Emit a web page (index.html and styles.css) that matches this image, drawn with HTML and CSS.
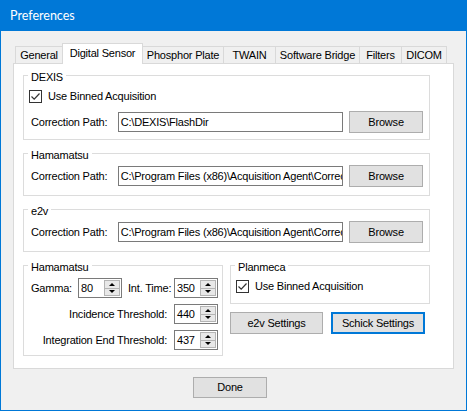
FILE: index.html
```
<!DOCTYPE html>
<html>
<head>
<meta charset="utf-8">
<title>Preferences</title>
<link rel="stylesheet" href="styles.css">
</head>
<body>
<div class="window">
  <div class="titlebar"><span class="title">Preferences</span></div>
  <div class="client">
    <div class="tabstrip">
      <div class="tab t-general">General</div>
      <div class="tab tab-active t-digital">Digital Sensor</div>
      <div class="tab t-phosphor">Phosphor Plate</div>
      <div class="tab t-twain">TWAIN</div>
      <div class="tab t-bridge">Software Bridge</div>
      <div class="tab t-filters">Filters</div>
      <div class="tab t-dicom">DICOM</div>
    </div>
    <div class="tabpage">
      <div class="group group-dexis">
        <div class="group-title">DEXIS</div>
        <div class="check-row">
          <span class="checkbox"><svg width="11" height="11" viewBox="0 0 11 11"><path d="M1.5 5.5 L4.2 8.2 L9.5 2.5" fill="none" stroke="#333" stroke-width="1.2"/></svg></span>
          <span class="check-label">Use Binned Acquisition</span>
        </div>
        <div class="path-row path-row-dexis">
          <span class="path-label">Correction Path:</span>
          <div class="textbox">C:\DEXIS\FlashDir</div>
          <div class="btn btn-browse">Browse</div>
        </div>
      </div>

      <div class="group group-path">
        <div class="group-title">Hamamatsu</div>
        <div class="path-row">
          <span class="path-label">Correction Path:</span>
          <div class="textbox">C:\Program Files (x86)\Acquisition Agent\Correction</div>
          <div class="btn btn-browse">Browse</div>
        </div>
      </div>

      <div class="group group-path">
        <div class="group-title">e2v</div>
        <div class="path-row">
          <span class="path-label">Correction Path:</span>
          <div class="textbox">C:\Program Files (x86)\Acquisition Agent\Correction</div>
          <div class="btn btn-browse">Browse</div>
        </div>
      </div>

      <div class="bottom-row">
        <div class="group group-ham">
          <div class="group-title">Hamamatsu</div>
          <div class="nud-row nud-row-first">
            <span class="lbl lbl-gamma">Gamma:</span>
            <div class="nud"><span class="nud-val">80</span><span class="spin"><span class="spin-btn"><span class="arr-up"></span></span><span class="spin-btn"><span class="arr-down"></span></span></span></div>
            <span class="lbl lbl-int">Int. Time:</span>
            <div class="nud"><span class="nud-val">350</span><span class="spin"><span class="spin-btn"><span class="arr-up"></span></span><span class="spin-btn"><span class="arr-down"></span></span></span></div>
          </div>
          <div class="nud-row">
            <span class="lbl lbl-right">Incidence Threshold:</span>
            <div class="nud"><span class="nud-val">440</span><span class="spin"><span class="spin-btn"><span class="arr-up"></span></span><span class="spin-btn"><span class="arr-down"></span></span></span></div>
          </div>
          <div class="nud-row">
            <span class="lbl lbl-right">Integration End Threshold:</span>
            <div class="nud"><span class="nud-val">437</span><span class="spin"><span class="spin-btn"><span class="arr-up"></span></span><span class="spin-btn"><span class="arr-down"></span></span></span></div>
          </div>
        </div>
        <div class="right-col">
          <div class="group group-plan">
            <div class="group-title">Planmeca</div>
            <div class="check-row">
              <span class="checkbox"><svg width="11" height="11" viewBox="0 0 11 11"><path d="M1.5 5.5 L4.2 8.2 L9.5 2.5" fill="none" stroke="#333" stroke-width="1.2"/></svg></span>
              <span class="check-label">Use Binned Acquisition</span>
            </div>
          </div>
          <div class="btn-row">
            <div class="btn btn-e2v">e2v Settings</div>
            <div class="btn btn-schick">Schick Settings</div>
          </div>
        </div>
      </div>
    </div>
    <div class="footer">
      <div class="btn btn-done">Done</div>
    </div>
  </div>
</div>
</body>
</html>
```
FILE: styles.css
```
* { box-sizing: border-box; }
html, body { margin: 0; padding: 0; }
body {
  font-family: "Liberation Sans", Arial, sans-serif;
  font-size: 11px;
  letter-spacing: -0.2px;
  line-height: 13px;
  color: #000;
  background: #f0f0f0;
}
.window {
  width: 467px;
  height: 411px;
  border: 1px solid #0078d7;
  border-top: none;
  background: #f0f0f0;
  display: flex;
  flex-direction: column;
}
.titlebar {
  height: 31px;
  margin: 0 -1px;
  background: #0078d7;
  display: flex;
  align-items: center;
  padding-left: 10px;
}
.title {
  font-family: Lato, "Noto Sans", sans-serif;
  font-size: 12.5px;
  letter-spacing: 0;
  color: #fff;
  line-height: 16px;
}
.client {
  padding: 12px 12px 0 12px;
}
.tabstrip {
  height: 20px;
  display: flex;
  align-items: flex-end;
  padding-left: 2px;
}
.tab {
  height: 17px;
  border: 1px solid #d9d9d9;
  border-bottom: none;
  margin-right: -1px;
  background: #f0f0f0;
  text-align: center;
  padding-top: 1px;
  line-height: 15px;
  white-space: nowrap;
}
.tab-active {
  height: 21px;
  margin-bottom: -1px;
  background: #fff;
  padding-top: 3px;
  line-height: 13px;
  position: relative;
  z-index: 1;
}
.t-general { width: 48px; }
.t-digital { width: 81px; }
.t-phosphor { width: 82px; }
.t-twain { width: 53px; }
.t-bridge { width: 85px; }
.t-filters { width: 43px; }
.t-dicom { width: 46px; }

.tabpage {
  width: 441px;
  height: 306px;
  background: #fff;
  border: 1px solid #d9d9d9;
  padding: 11px 0 0 9px;
}
.group {
  width: 407px;
  border: 1px solid #dcdcdc;
  display: flex;
  flex-direction: column;
  padding: 0 6px 8px 7px;
  margin-bottom: 13px;
}
.group-title {
  align-self: flex-start;
  margin-top: -5px;
  margin-left: -3px;
  padding: 0 3px;
  background: #fff;
  line-height: 13px;
  height: 13px;
}
.group-dexis { padding-bottom: 6px; }
.check-row {
  height: 17px;
  margin-top: 4px;
  margin-left: -2px;
  display: flex;
  align-items: center;
}
.checkbox {
  width: 13px;
  height: 13px;
  border: 1px solid #333;
  background: #fff;
  display: flex;
  align-items: center;
  justify-content: center;
  margin-right: 6px;
}
.checkbox svg { display: block; }
.path-row {
  height: 22px;
  margin-top: 3px;
  display: flex;
  align-items: center;
}
.path-row-dexis { margin-top: 6px; }
.path-label { width: 87px; }
.textbox {
  width: 226px;
  height: 20px;
  border: 1px solid #7a7a7a;
  background: #fff;
  padding: 0 2px;
  line-height: 18px;
  white-space: nowrap;
  overflow: hidden;
}
.btn {
  height: 22px;
  background: #e1e1e1;
  border: 1px solid #adadad;
  display: flex;
  align-items: center;
  justify-content: center;
  white-space: nowrap;
}
.btn-browse { width: 74px; margin-left: 6px; }

.bottom-row {
  display: flex;
  gap: 7px;
}
.group-ham {
  width: 200px;
  padding: 0 4px 5px 7px;
  margin-bottom: 0;
}
.nud-row {
  height: 20px;
  margin-top: 6px;
  display: flex;
  align-items: center;
  justify-content: flex-end;
}
.nud-row-first {
  margin-top: 4px;
  justify-content: flex-start;
}
.lbl-gamma { width: 47px; }
.lbl-int { width: 46px; margin-left: 6px; }
.lbl-right { margin-right: 7px; }
.nud {
  width: 44px;
  height: 20px;
  border: 1px solid #7a7a7a;
  background: #fff;
  padding: 1px;
  display: flex;
}
.nud-val {
  flex: 1;
  padding-left: 1px;
  line-height: 16px;
}
.spin {
  width: 16px;
  display: flex;
  flex-direction: column;
}
.spin-btn {
  flex: 1;
  background: #e8e8e8;
  border: 1px solid #b4b4b4;
  display: flex;
  align-items: center;
  justify-content: center;
}
.spin-btn + .spin-btn { border-top: none; }
.arr-up {
  width: 0;
  height: 0;
  border-left: 3px solid transparent;
  border-right: 3px solid transparent;
  border-bottom: 3px solid #000;
}
.arr-down {
  width: 0;
  height: 0;
  border-left: 3px solid transparent;
  border-right: 3px solid transparent;
  border-top: 3px solid #000;
}
.right-col {
  width: 200px;
  display: flex;
  flex-direction: column;
}
.group-plan {
  width: 200px;
  padding: 0 6px 8px 7px;
  margin-bottom: 0;
}
.btn-row {
  margin-top: 8px;
  display: flex;
  gap: 8px;
}
.btn-e2v { width: 93px; }
.btn-schick { width: 94px; border: 2px solid #0078d7; }
.footer {
  padding-top: 8px;
  padding-left: 180px;
}
.btn-done { width: 74px; height: 21px; }
```
